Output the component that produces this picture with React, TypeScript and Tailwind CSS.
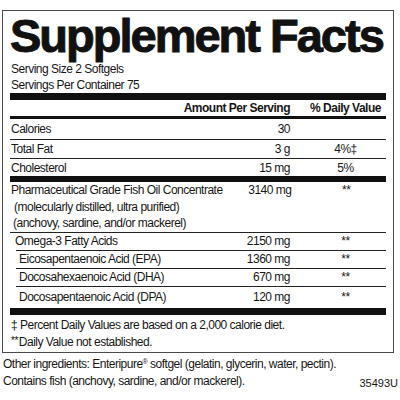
type Row = {
  name: string;
  amount: string;
  dv?: string;
  h: string;
  pad?: string;
  line?: string;
};

const basics: Row[] = [
  { name: "Calories", amount: "30", h: "h-[20px]", line: "border-b border-[#222]" },
  { name: "Total Fat", amount: "3 g", dv: "4%‡", h: "h-[18px]", line: "border-b border-[#222]" },
  { name: "Cholesterol", amount: "15 mg", dv: "5%", h: "h-[17px]" },
];

const omegas: Row[] = [
  { name: "Omega-3 Fatty Acids", amount: "2150 mg", dv: "**", h: "h-[17px]", pad: "pl-[5px]", line: "ml-[6px] border-b border-[#222]" },
  { name: "Eicosapentaenoic Acid (EPA)", amount: "1360 mg", dv: "**", h: "h-[17px]", pad: "pl-[9px]", line: "ml-[6px] border-b border-[#222]" },
  { name: "Docosahexaenoic Acid (DHA)", amount: "670 mg", dv: "**", h: "h-[17px]", pad: "pl-[9px]", line: "ml-[6px] border-b border-[#222]" },
  { name: "Docosapentaenoic Acid (DPA)", amount: "120 mg", dv: "**", h: "h-[21px]", pad: "pl-[9px]" },
];

function FactRow({ row }: { row: Row }) {
  return (
    <div className={row.line ?? ""}>
      <div className={`flex items-center ${row.h} ${row.pad ?? "pl-[1px]"} ${row.line?.includes("ml-") ? "-ml-[6px]" : ""}`}>
        <span className="flex-1 whitespace-nowrap">{row.name}</span>
        <span className="w-[70px] text-right whitespace-nowrap">{row.amount}</span>
        <span className="ml-[15px] w-[81px] text-center">{row.dv ?? ""}</span>
      </div>
    </div>
  );
}

export default function App() {
  return (
    <div className="h-[400px] w-[400px] overflow-hidden bg-white pt-[10px] font-['Liberation_Sans',Arial,sans-serif] text-[12px] leading-[16px] tracking-[-0.5px] text-[#161616]">
      <div className="ml-[2px] w-[392px] border border-[#4a4a4a] px-[7px]">
        <h1 className="mt-[1px] h-[47px] text-[47px] leading-[47px] font-bold tracking-[-2px] whitespace-nowrap text-[#111] [-webkit-text-stroke:1px_#111]">
          Supplement Facts
        </h1>
        <div className="mt-[2px] pl-[1px]">
          <div>Serving Size 2 Softgels</div>
          <div>Servings Per Container 75</div>
        </div>
        <div className="h-[7px] bg-[#111]" />
        <div className="flex h-[16px] items-center font-bold">
          <span className="flex-1" />
          <span className="whitespace-nowrap">Amount Per Serving</span>
          <span className="ml-[15px] w-[81px] text-center whitespace-nowrap">% Daily Value</span>
        </div>
        <div className="h-[3px] bg-[#111]" />
        {basics.map((r) => (
          <FactRow key={r.name} row={r} />
        ))}
        <div className="h-[6px] bg-[#111]" />
        <div className="border-b border-[#222] pl-[1px] leading-[16.5px]">
          <div className="flex">
            <span className="flex-1 whitespace-nowrap">Pharmaceutical Grade Fish Oil Concentrate</span>
            <span className="w-[70px] text-right">3140 mg</span>
            <span className="ml-[15px] w-[81px] text-center">**</span>
          </div>
          <div className="pl-[3px]">(molecularly distilled, ultra purified)</div>
          <div className="pl-[2px]">(anchovy, sardine, and/or mackerel)</div>
        </div>
        {omegas.map((r) => (
          <FactRow key={r.name} row={r} />
        ))}
        <div className="h-[7px] bg-[#111]" />
        <div className="pt-[2px] pb-[2px] pl-[1px]">
          <div>‡ Percent Daily Values are based on a 2,000 calorie diet.</div>
          <div>
            <span className="mr-[1px] align-[2px] text-[10px]">**</span>Daily Value not established.
          </div>
        </div>
      </div>
      <div className="mt-[3px] pr-[2px] pl-[3px]">
        <div className="whitespace-nowrap">
          Other ingredients: Enteripure<sup className="text-[7px]">®</sup> softgel (gelatin, glycerin, water, pectin).
        </div>
        <div className="flex items-center">
          <span className="flex-1 whitespace-nowrap">Contains fish (anchovy, sardine, and/or mackerel).</span>
          <span className="mt-[3px] text-[11px] tracking-[0px]">35493U</span>
        </div>
      </div>
    </div>
  );
}
